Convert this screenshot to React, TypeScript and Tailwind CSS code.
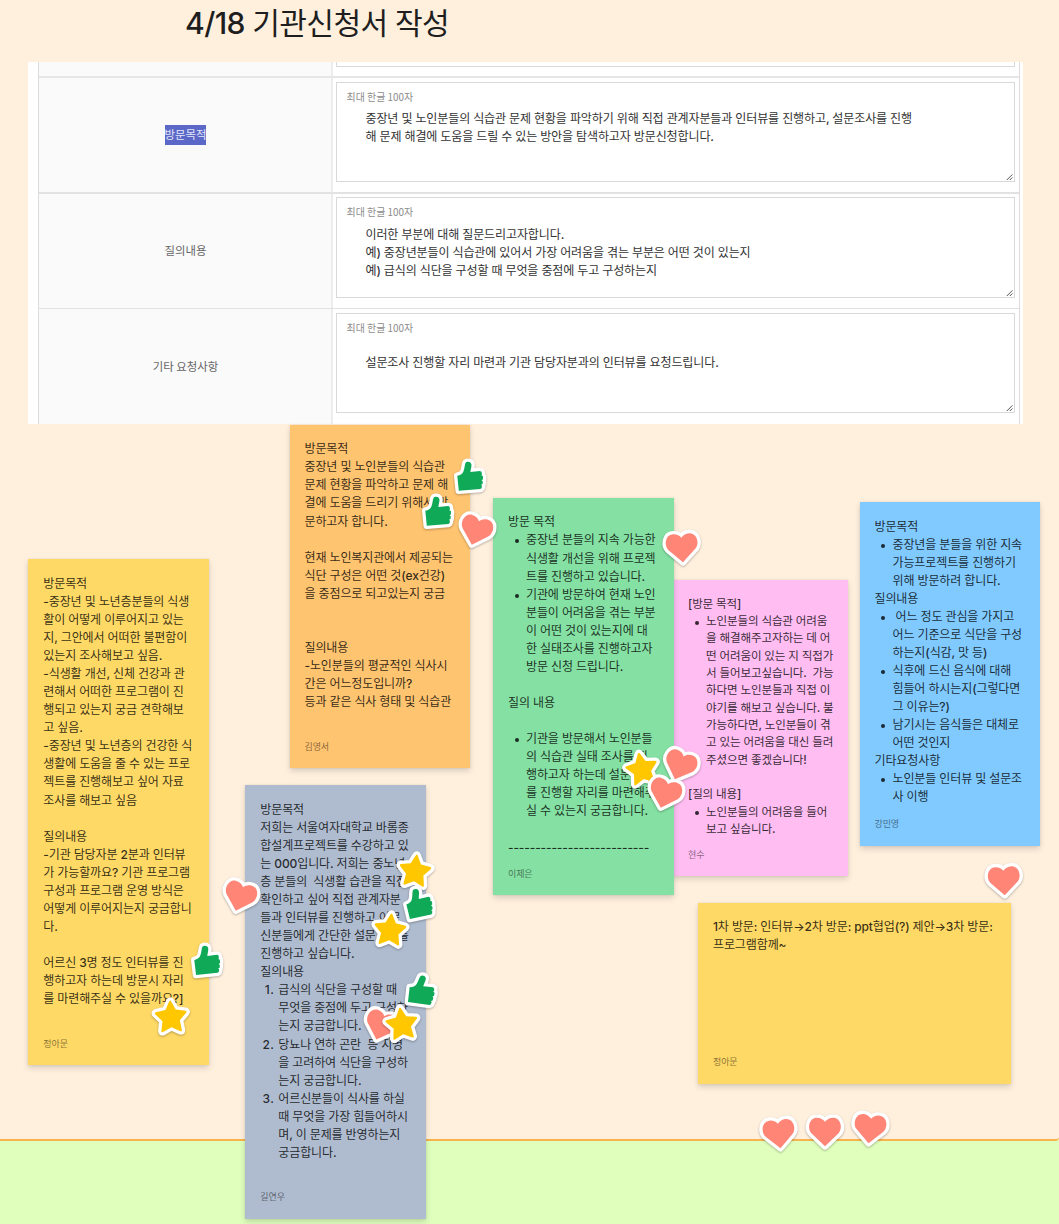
import React from "react";

type Line =
  | string
  | { mark: string; text: string }
  | { indent: string };

type NoteData = {
  box: string;
  color: string;
  type?: string;
  row?: string;
  author: string;
  lines: Line[];
};

const b = (text: string): Line => ({ mark: "•", text });
const n = (mark: string, text: string): Line => ({ mark, text });
const i = (indent: string): Line => ({ indent });

const notes: NoteData[] = [
  {
    box: "left-[289.5px] top-[424.8px] w-[180.5px] h-[343px]",
    color: "bg-[#ffc470]",
    author: "김영서",
    lines: [
      "방문목적",
      "중장년 및 노인분들의 식습관",
      "문제 현황을 파악하고 문제 해",
      "결에 도움을 드리기 위해서 방",
      "문하고자 합니다.",
      "",
      "현재 노인복지관에서 제공되는",
      "식단 구성은 어떤 것(ex건강)",
      "을 중점으로 되고있는지 궁금",
      "",
      "",
      "질의내용",
      "-노인분들의 평균적인 식사시",
      "간은 어느정도입니까?",
      "등과 같은 식사 형태 및 식습관",
    ],
  },
  {
    box: "left-[28.3px] top-[559.3px] w-[180.7px] h-[506px]",
    color: "bg-[#ffd966]",
    author: "정아문",
    lines: [
      "방문목적",
      "-중장년 및 노년층분들의 식생",
      "활이 어떻게 이루어지고 있는",
      "지, 그안에서 어떠한 불편함이",
      "있는지 조사해보고 싶음.",
      "-식생활 개선, 신체 건강과 관",
      "련해서 어떠한 프로그램이 진",
      "행되고 있는지 궁금 견학해보",
      "고 싶음.",
      "-중장년 및 노년층의 건강한 식",
      "생활에 도움을 줄 수 있는 프로",
      "젝트를 진행해보고 싶어 자료",
      "조사를 해보고 싶음",
      "",
      "질의내용",
      "-기관 담당자분 2분과 인터뷰",
      "가 가능할까요? 기관 프로그램",
      "구성과 프로그램 운영 방식은",
      "어떻게 이루어지는지 궁금합니",
      "다.",
      "",
      "어르신 3명 정도 인터뷰를 진",
      "행하고자 하는데 방문시 자리",
      "를 마련해주실 수 있을까요?]",
    ],
  },
  {
    box: "left-[245.3px] top-[785.2px] w-[180.7px] h-[433.5px]",
    color: "bg-[#afbccf]",
    author: "길연우",
    lines: [
      "방문목적",
      "저희는 서울여자대학교 바롬종",
      "합설계프로젝트를 수강하고 있",
      "는 000입니다. 저희는 중노년",
      "층 분들의  식생활 습관을 직접",
      "확인하고 싶어 직접 관계자분",
      "들과 인터뷰를 진행하고 어르",
      "신분들에게 간단한 설문조사를",
      "진행하고 싶습니다.",
      "질의내용",
      n("1.", "급식의 식단을 구성할 때"),
      i("무엇을 중점에 두고 구성하"),
      i("는지 궁금합니다."),
      n("2.", "당뇨나 연하 곤란  등 지병"),
      i("을 고려하여 식단을 구성하"),
      i("는지 궁금합니다."),
      n("3.", "어르신분들이 식사를 하실"),
      i("때 무엇을 가장 힘들어하시"),
      i("며, 이 문제를 반영하는지"),
      i("궁금합니다."),
    ],
  },
  {
    box: "left-[673px] top-[580.3px] w-[175px] h-[295.5px]",
    color: "bg-[#ffbdf2]",
    type: "text-[11.56px]",
    row: "h-[17.33px]",
    author: "현수",
    lines: [
      "[방문 목적]",
      b("노인분들의 식습관 어려움"),
      i("을 해결해주고자하는 데 어"),
      i("떤 어려움이 있는 지 직접가"),
      i("서 들어보고싶습니다.  가능"),
      i("하다면 노인분들과 직접 이"),
      i("야기를 해보고 싶습니다. 불"),
      i("가능하다면, 노인분들이 겪"),
      i("고 있는 어려움을 대신 들려"),
      i("주셨으면 좋겠습니다!"),
      "",
      "[질의 내용]",
      b("노인분들의 어려움을 들어"),
      i("보고 싶습니다."),
    ],
  },
  {
    box: "left-[493px] top-[497.9px] w-[180.5px] h-[397.3px]",
    color: "bg-[#85e0a3]",
    author: "이제은",
    lines: [
      "방문 목적",
      b("중장년 분들의 지속 가능한"),
      i("식생활 개선을 위해 프로젝"),
      i("트를 진행하고 있습니다."),
      b("기관에 방문하여 현재 노인"),
      i("분들이 어려움을 겪는 부분"),
      i("이 어떤 것이 있는지에 대"),
      i("한 실태조사를 진행하고자"),
      i("방문 신청 드립니다."),
      "",
      "질의 내용",
      "",
      b("기관을 방문해서 노인분들"),
      i("의 식습관 실태 조사를 진"),
      i("행하고자 하는데 설문조사"),
      i("를 진행할 자리를 마련해주"),
      i("실 수 있는지 궁금합니다."),
      "",
      "--------------------------",
    ],
  },
  {
    box: "left-[859.5px] top-[502px] w-[180.7px] h-[343.5px]",
    color: "bg-[#80caff]",
    author: "강민영",
    lines: [
      "방문목적",
      b("중장년을 분들을 위한 지속"),
      i("가능프로젝트를 진행하기"),
      i("위해 방문하려 합니다."),
      "질의내용",
      b(" 어느 정도 관심을 가지고"),
      i("어느 기준으로 식단을 구성"),
      i("하는지(식감, 맛 등)"),
      b("식후에 드신 음식에 대해"),
      i("힘들어 하시는지(그렇다면"),
      i("그 이유는?)"),
      b("남기시는 음식들은 대체로"),
      i("어떤 것인지"),
      "기타요청사항",
      b("노인분들 인터뷰 및 설문조"),
      i("사 이행"),
    ],
  },
  {
    box: "left-[698px] top-[902.5px] w-[313px] h-[181px]",
    color: "bg-[#ffd966]",
    author: "정아문",
    lines: [
      "1차 방문: 인터뷰→2차 방문: ppt협업(?) 제안→3차 방문:",
      "프로그램함께~",
    ],
  },
];

/** Latin runs are set in medium weight, Hangul in regular. */
function Mixed({ children }: { children: string }) {
  return (
    <span className="whitespace-pre">
      {children.split(/([\x20-\x7e→]+)/).map((run, k) =>
        k % 2 ? (
          <span key={k} className="font-medium">
            {run}
          </span>
        ) : (
          run
        ),
      )}
    </span>
  );
}

function Note({ note }: { note: NoteData }) {
  const row = note.row ?? "h-[18.07px]";
  return (
    <article
      className={`absolute flex flex-col justify-between px-[15px] pt-[15.5px] pb-[14.3px] shadow-[0_3px_6px_rgba(0,0,0,0.15),0_0_2px_rgba(0,0,0,0.08)] ${note.box} ${note.color}`}
    >
      <div className={`tracking-[-0.135px] text-black/80 ${note.type ?? "text-[12.04px]"}`}>
        {note.lines.map((line, k) => {
          if (typeof line === "string") {
            return (
              <p key={k} className={`flex items-center ${row}`}>
                <Mixed>{line}</Mixed>
              </p>
            );
          }
          if ("indent" in line) {
            return (
              <p key={k} className={`flex items-center pl-[18px] ${row}`}>
                <Mixed>{line.indent}</Mixed>
              </p>
            );
          }
          return (
            <p key={k} className={`flex items-center ${row}`}>
              {line.mark === "•" ? (
                <span className="ml-[6.6px] mr-[7.4px] mt-[2px] size-[4px] shrink-0 rounded-full bg-black/80" />
              ) : (
                <span className="flex w-[18px] shrink-0 justify-end pr-[4.2px] font-medium tracking-[0.3px]">
                  {line.mark}
                </span>
              )}
              <Mixed>{line.text}</Mixed>
            </p>
          );
        })}
      </div>
      <footer className="text-[9px] leading-[14px] tracking-[-0.1px] text-black/50">{note.author}</footer>
    </article>
  );
}

const shapes = {
  heart: {
    fill: "#ff8577",
    d: "M0 14.3 L-13.6 1.3 C-18 -3.6 -16 -14.3 -8.2 -14.3 C-4.5 -14.3 -1.5 -12.6 0 -10.2 C1.5 -12.6 4.5 -14.3 8.2 -14.3 C16 -14.3 18 -3.6 13.6 1.3 Z",
  },
  star: {
    fill: "#ffc700",
    d: "M-.9 -16.8 Q0 -18.2 .9 -16.8 L5.2 -8.2 L14.9 -6.5 Q16.6 -5.8 15.4 -4.4 L8.7 2.7 L10.3 12.7 Q10.1 14.3 8.7 13.6 L0 9.2 L-8.7 13.6 Q-10.1 14.3 -10.3 12.7 L-8.7 2.7 L-15.4 -4.4 Q-16.6 -5.8 -14.9 -6.5 L-5.2 -8.2 Z",
  },
  thumb: {
    fill: "#0fa958",
    d: "M-12.7 -.2 Q-7.8 -1.2 -6.6 -4.6 C-5.4 -7.6 -5.4 -10.6 -4.6 -12.8 C-3.8 -15 .8 -14.8 1.4 -11.8 C1.8 -9.2 .6 -7 .4 -4 L10 -5 Q12 -4.8 11.8 -2.8 L12 -1.6 L11.2 -.7 L12.9 0 L13 3.2 L11.6 4.2 L12.7 5.2 L12.6 8 L11 8.8 L12 9.8 L11.6 12 L10.4 13 L-11.2 14.7 Z",
  },
};

const stickers: { kind: keyof typeof shapes; x: number; y: number; r: number }[] = [
  { kind: "thumb", x: 470, y: 475.9, r: 0 },
  { kind: "thumb", x: 438, y: 511.3, r: 0 },
  { kind: "heart", x: 475.6, y: 530.6, r: 17 },
  { kind: "thumb", x: 207.4, y: 959.7, r: -1 },
  { kind: "star", x: 171.4, y: 1018.2, r: -3 },
  { kind: "heart", x: 239.8, y: 896.8, r: 17 },
  { kind: "star", x: 415, y: 871.6, r: 6 },
  { kind: "thumb", x: 418.8, y: 903, r: -8 },
  { kind: "star", x: 389.6, y: 931.4, r: 5 },
  { kind: "thumb", x: 422, y: 990, r: 12 },
  { kind: "heart", x: 380.8, y: 1025.6, r: 19 },
  { kind: "star", x: 402.2, y: 1025.2, r: -7 },
  { kind: "heart", x: 682.4, y: 547.6, r: -4 },
  { kind: "star", x: 642, y: 770, r: -11 },
  { kind: "heart", x: 679.6, y: 766, r: 21 },
  { kind: "heart", x: 665.2, y: 793.6, r: 17 },
  { kind: "heart", x: 1004, y: 881.2, r: -3 },
  { kind: "heart", x: 778.8, y: 1134, r: -6 },
  { kind: "heart", x: 825, y: 1131.8, r: 0 },
  { kind: "heart", x: 870, y: 1128.6, r: 6 },
];

function Sticker({ s }: { s: (typeof stickers)[number] }) {
  const shape = shapes[s.kind];
  return (
    <svg
      className="absolute size-[48px] drop-shadow-[0_1px_1px_rgba(0,0,0,0.28)]"
      style={{ left: s.x - 24, top: s.y - 24 }}
      viewBox="-24 -24 48 48"
    >
      <g transform={`rotate(${s.r})`}>
        <path d={shape.d} fill="#fff" stroke="#fff" strokeWidth="6.6" strokeLinejoin="round" />
        <path d={shape.d} fill={shape.fill} />
      </g>
    </svg>
  );
}

function Grip() {
  return (
    <svg className="size-[8px] self-end" viewBox="0 0 8 8" stroke="#555" strokeWidth="1">
      <path d="M.8 7 L6.4 1.4 M3.8 7 L6.4 4.4" fill="none" />
    </svg>
  );
}

const rows = [
  {
    label: "방문목적",
    selected: true,
    height: "h-[116px] border-b-2",
    area: "h-[100px] mt-[4px]",
    top: "pt-[13px]",
    lines: [
      "중장년 및 노인분들의 식습관 문제 현황을 파악하기 위해 직접 관계자분들과 인터뷰를 진행하고, 설문조사를 진행",
      "해 문제 해결에 도움을 드릴 수 있는 방안을 탐색하고자 방문신청합니다.",
    ],
  },
  {
    label: "질의내용",
    selected: false,
    height: "h-[115px] border-b",
    area: "h-[101px] mt-[3px]",
    top: "pt-[14px]",
    lines: [
      "이러한 부분에 대해 질문드리고자합니다.",
      "예) 중장년분들이 식습관에 있어서 가장 어려움을 겪는 부분은 어떤 것이 있는지",
      "예) 급식의 식단을 구성할 때 무엇을 중점에 두고 구성하는지",
    ],
  },
  {
    label: "기타 요청사항",
    selected: false,
    height: "h-[115px]",
    area: "h-[100px] mt-[4px]",
    top: "pt-[26px]",
    lines: ["설문조사 진행할 자리 마련과 기관 담당자분과의 인터뷰를 요청드립니다."],
  },
];

export default function App() {
  return (
    <main className="relative flex h-[1224px] w-[1059px] flex-col overflow-hidden bg-[#e0ffbd] font-['Inter','Noto_Sans_CJK_KR',sans-serif]">
      <section className="h-[1141px] rounded-br-[4px] border-b-2 border-[#f8b34c] bg-[#fff0de]">
        <h1 className="h-[62px] pl-[185px] pt-[2px] text-[30.1px] leading-[42px] tracking-[-0.62px] text-[#1e1e1e]">
          <Mixed>4/18 기관신청서 작성</Mixed>
        </h1>

        <div className="ml-[28px] flex h-[362px] w-[995px] bg-white pl-[10px] pr-[3px]">
          <div className="flex flex-1 flex-col border-x border-[#dcdcdc]">
            <div className="flex h-[16px] border-b-2 border-[#e6e6e6]">
              <div className="w-[294px] border-r-2 border-[#ececec] bg-[#fafafa]" />
              <div className="ml-[3px] h-[5px] w-[679px] border border-t-0 border-[#d9d9d9]" />
            </div>
            {rows.map((r) => (
              <div key={r.label} className={`flex border-[#e2e2e2] ${r.height}`}>
                <div className="flex w-[294px] items-center justify-center border-r-2 border-[#ececec] bg-[#fafafa] pl-px font-['Noto_Sans_CJK_KR',sans-serif] text-[11.4px] text-[#666]">
                  <span
                    className={
                      r.selected
                        ? "h-[20px] bg-[#5b68c7] leading-[19px] text-[#e4e6fa]"
                        : "h-[20px] leading-[19px]"
                    }
                  >
                    {r.label}
                  </span>
                </div>
                <div
                  className={`ml-[3px] flex w-[679px] border border-[#d9d9d9] pl-[9.5px] ${r.area}`}
                >
                  <div className="flex-1">
                    <p className="h-[14px] pt-[7px] font-['Noto_Sans_CJK_KR',sans-serif] text-[9.95px] leading-[14px] text-[#8c8c8c]">
                      최대 한글 100자
                    </p>
                    <div className={`pl-[19px] text-[12.04px] tracking-[-0.135px] text-[#333] ${r.top}`}>
                      {r.lines.map((t) => (
                        <p key={t} className="h-[18.07px] leading-[18.07px]">
                          <Mixed>{t}</Mixed>
                        </p>
                      ))}
                    </div>
                  </div>
                  <Grip />
                </div>
              </div>
            ))}
          </div>
        </div>
      </section>

      {notes.map((note) => (
        <Note key={note.box} note={note} />
      ))}
      {stickers.map((s, k) => (
        <Sticker key={k} s={s} />
      ))}
    </main>
  );
}
